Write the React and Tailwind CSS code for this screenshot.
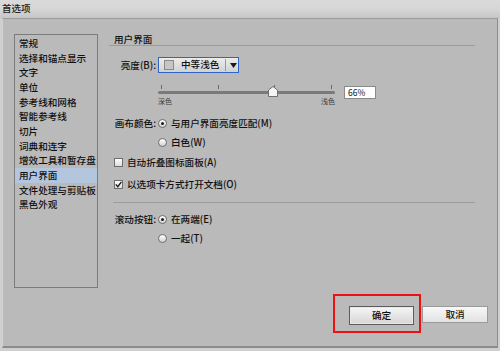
import React from "react";

const font = { fontFamily: '"Noto Sans CJK SC", "Noto Sans", sans-serif' };

const items = [
  "常规",
  "选择和锚点显示",
  "文字",
  "单位",
  "参考线和网格",
  "智能参考线",
  "切片",
  "词典和连字",
  "增效工具和暂存盘",
  "用户界面",
  "文件处理与剪贴板",
  "黑色外观",
];

const Radio = ({ checked }) => (
  <span className="flex h-[9px] w-[9px] items-center justify-center rounded-full border border-[#6e6e6e] bg-gradient-to-b from-[#ffffff] to-[#d4d4d4]">
    {checked && <span className="h-[3px] w-[3px] rounded-full bg-[#1a1a1a]" />}
  </span>
);

const Checkbox = ({ checked }) => (
  <span className="flex h-[9px] w-[9px] items-center justify-center border border-[#6e6e6e] bg-gradient-to-b from-[#ffffff] to-[#dcdcdc]">
    {checked && (
      <svg width="7" height="7" viewBox="0 0 7 7">
        <path d="M0.8 3.4 L2.8 5.6 L6.4 0.8" fill="none" stroke="#1a1a1a" strokeWidth="1.4" />
      </svg>
    )}
  </span>
);

const FieldRow = ({ label, children, className = "" }) => (
  <div className={`flex h-[15px] items-center ${className}`}>
    <div className="w-[49px] whitespace-nowrap pl-[5px] pr-[2px] text-right">{label}</div>
    {children}
  </div>
);

export default function App() {
  return (
    <div className="h-[351px] w-[500px] overflow-hidden bg-[#cfcfcf] text-[9.6px] font-medium text-[#111111]" style={font}>
      {/* title bar */}
      <div className="flex h-[18px] items-center bg-gradient-to-b from-[#dadada] via-[#d6d6d6] to-[#c6c6c6] pl-[2px] text-[9.5px] leading-none text-[#202020]">
        首选项
      </div>

      {/* dialog body */}
      <div className="ml-[2px] mr-[2px] flex h-[330px] flex-col border-b-[2px] border-l border-r border-t border-b-[#8c8c8c] border-l-[#d2d2d2] border-r-[#8e8e8e] border-t-[#9a9a9a] bg-[#bababa]">
        <div className="flex">
          {/* category list */}
          <div className="ml-[11px] mt-[15px] h-[254px] w-[84px] border border-[#7c7c7c] pt-[1px]">
            {items.map((it) => (
              <div
                key={it}
                className={`h-[14.67px] whitespace-nowrap pl-[4px] leading-[14.67px] ${
                  it === "用户界面" ? "bg-[#b4c5de]" : ""
                }`}
              >
                {it}
              </div>
            ))}
          </div>

          {/* settings */}
          <div className="ml-[11px] w-[366px] whitespace-nowrap">
            <div className="mt-[14px] h-[13px] border-b border-[#9c9c9c] pl-[5px] leading-[12px]">用户界面</div>

            <div className="mt-[11px] flex h-[16px] items-center">
              <div className="w-[49px] pr-[2px] text-right">亮度(B):</div>
              <div className="flex h-[16px] w-[81px] items-center border border-[#2f64c9] bg-gradient-to-b from-[#ececec] to-[#d2d2d2]">
                <span className="ml-[5px] h-[10px] w-[10px] border border-[#8a8a8a] bg-[#c6c6c6]" />
                <span className="ml-[7px] w-[44px] leading-none">中等浅色</span>
                <span className="h-[12px] w-px bg-[#9a9a9a]" />
                <svg className="ml-[4px]" width="7" height="5" viewBox="0 0 7 5">
                  <path d="M0 0 H7 L3.5 5 Z" fill="#1a1a1a" />
                </svg>
              </div>
            </div>

            {/* slider */}
            <div className="mt-[12px] flex h-[21px] items-start">
              <div className="relative ml-[49px] w-[177px]">
                <div className="flex h-[4px] justify-between px-[3px]">
                  <span className="w-px bg-[#6a6a6a]" />
                  <span className="w-px bg-[#6a6a6a]" />
                  <span className="w-px bg-[#6a6a6a]" />
                  <span className="w-px bg-[#6a6a6a]" />
                </div>
                <div className="mt-[2px] h-[3px] rounded-full bg-[#7a7a7a]" />
                <div className="mt-[3px] flex justify-between text-[7px] font-normal leading-[8px] text-[#3a3a3a]">
                  <span>深色</span>
                  <span>浅色</span>
                </div>
                <svg className="absolute left-[110px] top-[1px]" width="10" height="11" viewBox="0 0 10 11">
                  <path d="M5 0.5 L9.5 4 V10.5 H0.5 V4 Z" fill="#f4f4f4" stroke="#707070" />
                </svg>
              </div>
              <div className="ml-[9px] mt-[1px] flex h-[13px] w-[32px] items-center border border-[#8a8a8a] bg-white pl-[3px] text-[8.5px] font-normal leading-none">
                66%
              </div>
            </div>

            <FieldRow label="画布颜色:" className="mt-[10px]">
              <Radio checked />
              <span className="ml-[4px]">与用户界面亮度匹配(M)</span>
            </FieldRow>
            <FieldRow label="" className="mt-[4px]">
              <Radio />
              <span className="ml-[4px]">白色(W)</span>
            </FieldRow>

            <div className="mt-[5px] flex h-[15px] items-center pl-[5px]">
              <Checkbox />
              <span className="ml-[4px]">自动折叠图标面板(A)</span>
            </div>
            <div className="mt-[7px] flex h-[15px] items-center pl-[5px]">
              <Checkbox checked />
              <span className="ml-[4px]">以选项卡方式打开文档(O)</span>
            </div>

            <div className="ml-[4px] mt-[10px] h-px bg-[#9c9c9c]" />

            <FieldRow label="滚动按钮:" className="mt-[9px]">
              <Radio checked />
              <span className="ml-[4px]">在两端(E)</span>
            </FieldRow>
            <FieldRow label="" className="mt-[4px]">
              <Radio />
              <span className="ml-[4px]">一起(T)</span>
            </FieldRow>
          </div>
        </div>

        {/* buttons */}
        <div className="mr-[9px] mt-[6px] flex items-start justify-end">
          <div className="h-[39px] w-[88px] border-2 border-[#ee1111] pl-[14px] pt-[10px]">
            <div className="flex h-[19px] w-[65px] items-center justify-center border border-[#5c5c5c] bg-gradient-to-b from-[#f6f6f6] to-[#d6d6d6] shadow-[inset_0_0_0_1px_#e8e8e8]">
              确定
            </div>
          </div>
          <div className="ml-px mt-[12px] flex h-[17px] w-[66px] items-center justify-center border border-[#9a9a9a] bg-gradient-to-b from-[#f8f8f8] to-[#e2e2e2]">
            取消
          </div>
        </div>
      </div>
    </div>
  );
}
